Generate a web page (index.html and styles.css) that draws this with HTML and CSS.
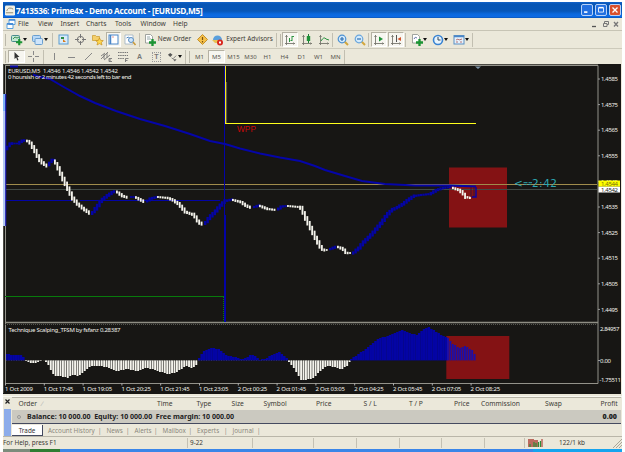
FILE: index.html
```html
<!DOCTYPE html>
<html lang="en">
<head>
<meta charset="utf-8">
<title>7413536: Prime4x - Demo Account - [EURUSD,M5]</title>
<link rel="stylesheet" href="styles.css">
</head>
<body>
<svg class="defs" aria-hidden="true">
  <symbol id="plus" viewBox="0 0 6 6"><path d="M2 0h2v2h2v2H4v2H2V4H0V2h2z" fill="#1c9434"/></symbol>
  <symbol id="caret" viewBox="0 0 4 3"><path d="M0 0h4L2 3z" fill="#111"/></symbol>
  <symbol id="axes" viewBox="0 0 12 12"><path d="M2.500 1v10M1 9.500h10M1.500 3l1-1.500 1 1.500M9.500 8.500l1 1-1 1" fill="none" stroke="#77776e" stroke-width=".9"/></symbol>
</svg>
<div class="window">
  <header class="title">
    <svg class="app-icon" width="10" height="11" viewBox="0 0 11 11"><rect width="11" height="11" rx="1.500" fill="#f2f0e4"/><path d="M2 6q1-4 5-3l2 1M1 8h8" stroke="#8a8268" fill="none"/></svg>
    <span class="title-text">7413536: Prime4x - Demo Account - [EURUSD,M5]</span>
    <span class="controls">
      <svg class="ctl" viewBox="0 0 12 12"><path d="M2.500 8.500h4" stroke="#fff" stroke-width="2"/></svg>
      <svg class="ctl" viewBox="0 0 12 12"><path d="M3 3.500h6v5H3z" stroke="#fff" fill="none"/><path d="M3 3h6" stroke="#fff" stroke-width="1.500"/></svg>
      <svg class="ctl close" viewBox="0 0 12 12"><path d="M3 3l6 6M9 3l-6 6" stroke="#fff" stroke-width="1.600"/></svg>
    </span>
  </header>

  <nav class="menu">
    <svg class="menu-icon" width="10" height="10" viewBox="0 0 10 10"><path d="M3 .5h6v5H3zM1 4.500h6v5H1z" fill="#fff" stroke="#5aa0dc"/><path d="M1 5h6M3 1h6" stroke="#3f86d6" stroke-width="1.300"/></svg>
    <span class="m-file">File</span><span class="m-view">View</span><span class="m-insert">Insert</span><span class="m-charts">Charts</span><span class="m-tools">Tools</span><span class="m-window">Window</span><span>Help</span>
    <svg class="mdi" width="30" height="8" viewBox="0 0 30 8"><path d="M2 6.500h4" stroke="#555" stroke-width="1.300"/><path d="M13.500 3.500h3.500v3h-3.500zM14.500 3V1.500h4v3H17" stroke="#777" fill="none"/><path d="M24 2l4 4.500M28 2l-4 4.500" stroke="#777" stroke-width="1.300"/></svg>
  </nav>

  <div class="bar bar-main">
    <i class="grip"></i>
    <span class="tool w22"><svg width="12" height="12" viewBox="0 0 12 12"><rect x=".5" y="1.500" width="8" height="6" rx="1" fill="#c3e8d2" stroke="#4a8a8e"/><path d="M2 5l2-2 2 1 2-1" stroke="#3c8f57" fill="none"/><use href="#plus" x="5" y="5" width="6.500" height="6.500"/></svg><svg width="4" height="3"><use href="#caret"/></svg></span>
    <span class="tool w22"><svg width="12" height="12" viewBox="0 0 12 12"><rect x=".5" y="1.500" width="8" height="6" rx="1" fill="#b7d8f7" stroke="#6a9fd0"/><rect x="3" y="4.500" width="7.500" height="6" rx="1" fill="#cfe5fb" stroke="#6a9fd0"/></svg><svg width="4" height="3"><use href="#caret"/></svg></span>
    <i class="sep gap3"></i>
    <span class="tool w17"><svg width="11" height="11" viewBox="0 0 11 11"><rect x="1" y="1" width="9" height="9" fill="#d7ebfa" stroke="#5b9bd0"/><path d="M3 3h3v2H3z" fill="#2b8c43"/><path d="M5 5l3 3H5z" fill="#d97b1d"/></svg></span>
    <span class="tool w17"><svg width="11" height="11" viewBox="0 0 11 11"><circle cx="5.500" cy="5.500" r="3.200" fill="none" stroke="#777"/><path d="M5.500 0v4M5.500 7v4M0 5.500h4M7 5.500h4" stroke="#777"/></svg></span>
    <span class="tool w17"><svg width="12" height="12" viewBox="0 0 12 12"><path d="M.5 1.500h3l1 1h3v4h-7z" fill="#f4cf6b" stroke="#c99a2e" stroke-width=".7"/><path d="M7.500 4l1.200 2.400 2.600.2-2 1.800.7 2.600-2.500-1.400L5 11l.7-2.600-2-1.800 2.600-.2z" fill="#ffd84e" stroke="#c78f1e" stroke-width=".7"/></svg></span>
    <span class="tool w15 on"><svg width="11" height="11" viewBox="0 0 11 11"><rect x="1" y="1" width="9" height="9" fill="#fff" stroke="#4a86c8"/><path d="M2.500 1v9" stroke="#4a86c8" stroke-width="1.500"/><path d="M4.500 3h1" stroke="#c33"/></svg></span>
    <span class="tool w18"><svg width="12" height="12" viewBox="0 0 12 12"><path d="M1 1h8v9H1z" fill="#fff" stroke="#9cb0c0" stroke-width=".8"/><path d="M2.500 4l2-1 2 2" stroke="#4884c0" fill="none"/><circle cx="7" cy="6" r="2.500" fill="#cfe6fb" stroke="#5b8fc4"/><path d="M9 8l2.500 3" stroke="#c89a3a" stroke-width="1.500"/></svg></span>
    <i class="sep"></i>
    <span class="tool order"><svg width="12" height="12" viewBox="0 0 12 12"><path d="M1.500.5h5l2 2v6.500h-7z" fill="#fff" stroke="#8a8f8a" stroke-width=".8"/><path d="M3 3h3M3 5h4" stroke="#9aa"/><use href="#plus" x="5" y="5" width="7" height="7"/></svg><b>New Order</b></span>
    <span class="tool w14"><svg width="11" height="11" viewBox="0 0 11 11"><path d="M5.500.5l5 5-5 5-5-5z" fill="#f5c04a" stroke="#c4912c"/><path d="M5.500 3v3M5.500 7v1.500" stroke="#7c530c" stroke-width="1.200"/></svg></span>
    <span class="tool advisors"><svg width="12" height="12" viewBox="0 0 12 12"><path d="M1 6a4.500 4.500 0 0 1 9 0z" fill="#5aa0dc"/><path d="M0 6h10l-2 3H3z" fill="#e9c354"/><circle cx="8" cy="8.500" r="3" fill="#d8281e"/><path d="M7 7.500h2v2H7z" fill="#fff"/></svg><b>Expert Advisors</b></span>
    <i class="sep"></i><i class="grip late"></i>
    <span class="tool w16 on"><svg width="12" height="12"><use href="#axes"/><path d="M5.500 4v4M8 2v5M8 2.500h2M6.500 6.500H8" stroke="#2c9440" fill="none"/></svg></span>
    <span class="tool w17"><svg width="12" height="12"><use href="#axes"/><path d="M7.500 0v9" stroke="#1d7d32"/><path d="M5.800 2h3.400v5H5.800z" fill="#1f9238"/></svg></span>
    <span class="tool w17"><svg width="12" height="12"><use href="#axes"/><path d="M3 7q3-5 5-2l3 1" stroke="#2c9440" fill="none"/></svg></span>
    <i class="sep"></i>
    <span class="tool w17 zoom"><svg width="12" height="12" viewBox="0 0 12 12"><path d="M7.500 7.500l3.500 3.500" stroke="#d3a63c" stroke-width="2"/><circle cx="5" cy="5" r="3.800" fill="#d5ebfb" stroke="#4d92d4" stroke-width="1.200"/><path d="M3 5h4M5 3v4" stroke="#2c6fb4" stroke-width="1.200"/></svg></span>
    <span class="tool w17"><svg width="12" height="12" viewBox="0 0 12 12"><path d="M7.500 7.500l3.500 3.500" stroke="#d3a63c" stroke-width="2"/><circle cx="5" cy="5" r="3.800" fill="#d5ebfb" stroke="#6aa6dc" stroke-width="1.200"/><path d="M3 5h4" stroke="#2c6fb4" stroke-width="1.200"/></svg></span>
    <i class="sep"></i>
    <span class="tool w16 on scroll"><svg width="12" height="12"><use href="#axes"/><path d="M6 2.500l4 2.500-4 2.500z" fill="#1f9238"/></svg></span>
    <span class="tool w16 on shift"><svg width="12" height="12"><use href="#axes"/><path d="M6.500 1v7" stroke="#555"/><path d="M11 3v4L7.500 5z" fill="#d2542a"/></svg></span>
    <i class="sep gap3"></i>
    <span class="tool w20"><svg width="12" height="12" viewBox="0 0 12 12"><path d="M1.500.5h5l2 2v6.500h-7z" fill="#fff" stroke="#8a8f8a" stroke-width=".8"/><path d="M3 5q1-3 3-1" stroke="#67a" fill="none"/><use href="#plus" x="5" y="5" width="7" height="7"/></svg><svg width="4" height="3"><use href="#caret"/></svg></span>
    <span class="tool w20"><svg width="12" height="12" viewBox="0 0 12 12"><circle cx="6" cy="6" r="4.500" fill="#e8f4fd" stroke="#3a84d2" stroke-width="1.600"/><path d="M6 3v3h2.500" stroke="#345" fill="none"/></svg><svg width="4" height="3"><use href="#caret"/></svg></span>
    <span class="tool w22"><svg width="12" height="12" viewBox="0 0 12 12"><rect x="1" y="1.500" width="10" height="8.500" fill="#e6f1fa" stroke="#5a8fc4"/><path d="M1 2.500h10" stroke="#4a86c8" stroke-width="1.500"/><path d="M3 6l2-1 1 1 3-1M3 8h2M7 8h2" stroke="#a55" stroke-width=".8" fill="none"/></svg><svg width="4" height="3"><use href="#caret"/></svg></span>
    <i class="sep"></i>
  </div>

  <div class="bar bar-draw">
    <i class="grip"></i>
    <span class="tool w17 on"><svg width="11" height="11" viewBox="0 0 11 11"><path d="M3.500 1l5 5H6.300l1.200 3-1.200.5L5.200 6.600 3.500 8z" fill="#333"/></svg></span>
    <span class="tool w17"><svg width="11" height="11"><path d="M5.500 0v4M5.500 7v4M0 5.500h4M7 5.500h4" stroke="#888"/></svg></span>
    <i class="sep gap3"></i>
    <span class="tool w17"><svg width="11" height="11"><path d="M5.500 2v7" stroke="#888"/></svg></span>
    <span class="tool w17"><svg width="11" height="11"><path d="M2 6.500h7" stroke="#888"/></svg></span>
    <span class="tool w17"><svg width="11" height="11"><path d="M2 9l7-7" stroke="#888"/></svg></span>
    <span class="tool w17"><svg width="12" height="11"><path d="M1 8l7-7M1 5l4-3M4 9l6-5M4 3v5M7 2v5M9 7.500h3M9 7.500v3h3M9 9h2" stroke="#777" stroke-width=".9" fill="none"/></svg></span>
    <span class="tool w17"><svg width="12" height="11"><path d="M1 1.500h10M1 4.500h10M1 7.500h6" stroke="#777" stroke-dasharray="1.500 .7"/><path d="M8.500 11V7.500h3M8.500 9.500h2" stroke="#777" stroke-width=".9" fill="none"/></svg></span>
    <span class="tool w17 letter">A</span>
    <span class="tool w17 letter"><em>T</em></span>
    <span class="tool w19"><svg width="11" height="10" viewBox="0 0 12 11"><path d="M1 3l2.500-2L6 3 3.500 5.500z" fill="#555"/><path d="M5 6.500l1.500 1L10 4" fill="none" stroke="#777"/><path d="M6.500 8h4L8.500 10.500z" fill="#666"/></svg><svg width="4" height="3"><use href="#caret"/></svg></span>
    <i class="sep gap2"></i><i class="grip late"></i>
    <span class="tool w17 tf">M1</span><span class="tool w17 tf on">M5</span><span class="tool w17 tf">M15</span><span class="tool w17 tf">M30</span><span class="tool w17 tf">H1</span><span class="tool w17 tf">H4</span><span class="tool w17 tf">D1</span><span class="tool w17 tf">W1</span><span class="tool w17 tf">MN</span>
    <i class="sep"></i>
  </div>

  <svg class="chart" id="chart" width="619" height="332" viewBox="3 64 619 332">
    <rect x="3" y="64" width="618" height="330" fill="#171614"/>
    <path d="M3 64.500H598M3.500 64V393" stroke="#4c4b45"/>
    <rect x="449" y="167.500" width="58" height="60" class="zone"/>
    <rect x="446.300" y="336" width="63" height="43" class="zone"/>
    <g id="histogram"></g>
    <path d="M5.500 66V383.500H598V65.500H5" class="frame"/>
    <path d="M5 322.500H598" stroke="#8f8e84" stroke-width="1.600"/>
    <path d="M5 324.500H598" stroke="#55554f" stroke-dasharray="1 1"/>
    <g fill="none">
      <path d="M6 200.500H72M80 200.500H220" stroke="#0303a6"/>
      <path d="M6 184.500H597" stroke="#a08c4c"/>
      <path d="M6 189.500H597" stroke="#414a46"/>
      <path d="M224.500 66V322" stroke="#0303a6"/>
      <path d="M225 215V322" stroke="#0303a6" stroke-width="2"/>
      <path d="M225.500 66V123.500" stroke="#f2ea18"/>
      <path d="M226.600 82V123" stroke="#80765a" stroke-width=".8"/>
      <path d="M225 123.500H476" stroke="#ffff1c"/>
      <path d="M5 296.500H224" stroke="#087a0c"/>
      <path d="M223.500 297V322" stroke="#087a0c" stroke-dasharray="1 1"/>
      <polyline class="average" points="10,66.500 18,66.500"/>
      <polyline class="average" points="33,74.500 38,76.500 50,79 62,86 80,96 95,103 116,111 140,119 165,126 190,134 210,141 225,144 240,148.500 260,153.500 280,157.500 300,161 315,166 325,170 345,176 362,181 385,184 415,185.500 450,185.500 476,186.500"/>
    </g>
    <g id="candles"></g>
    <path d="M471 197V187M474 197V187" stroke="#3a1030" stroke-width="1"/>
    <path d="M476 187V197H472" stroke="#0b03a0" fill="none" stroke-width="1.500"/>
    <path d="M475 66.500h6l-3 2.500z" fill="#7d93a6"/>
    <rect x="3" y="94" width="3" height="132" fill="#fff"/>
    <rect x="3" y="94" width="3" height="17" fill="#7fb2f5"/>
    <rect x="3" y="111" width="2" height="115" fill="#b4c8f0"/>
    <path d="M5.700 94V226" stroke="#1a1ab4" stroke-width="1.200"/>
    <text class="label" x="8" y="72.700" textLength="110">EURUSD,M5&#160; 1.4546 1.4546 1.4542 1.4542</text>
    <text class="label" x="8" y="79.300" textLength="123.500">0 hoursish or 2 minutes 42 seconds left to bar end</text>
    <text class="label" x="8.500" y="332.300" textLength="112">Technique Scalping_TFSM by fsfanz 0.28387</text>
    <text class="wpp" x="237" y="131.500" textLength="19" lengthAdjust="spacingAndGlyphs">WPP</text>
    <text class="timer" x="514" y="186.700" textLength="43">&lt;--2:42</text>
    <path d="M523.500 182.700h4M528.500 182.700h3.500" stroke="#2ca6b0"/>
    <g id="scale"></g>
    <rect x="598.500" y="180.500" width="21.500" height="6.200" fill="#ffff00"/>
    <text class="tag olive" x="601" y="185.700" textLength="17">1.4544</text>
    <rect x="598.500" y="186.700" width="21.500" height="5.800" fill="#fff"/>
    <text class="tag" x="601" y="191.800" textLength="17">1.4542</text>
    <text class="label" x="600" y="330.600" textLength="19.500">2.84957</text>
    <text class="label" x="600" y="362.800" textLength="11">0.00</text>
    <text class="label" x="599.500" y="381.600" textLength="21.500">-1.75511</text>
    <path d="M598 360.500h2" stroke="#999"/>
  </svg>

  <section class="terminal">
    <div class="side"><svg width="5" height="5"><path d="M.5.5l4 4M4.500.5l-4 4" stroke="#222" stroke-width="1.200"/></svg><span></span></div>
    <div class="panel">
      <div class="head">
        <span class="c-order">Order <u>∕</u></span><span class="c-time">Time</span><span class="c-type">Type</span><span class="c-size">Size</span><span class="c-symbol">Symbol</span><span class="c-price">Price</span><span class="c-sl">S / L</span><span class="c-tp">T / P</span><span class="c-price2">Price</span><span class="c-comm">Commission</span><span class="c-swap">Swap</span><span class="c-profit">Profit</span>
      </div>
      <div class="balance"><i></i><span>Balance: 10 000.00&nbsp; Equity: 10 000.00&nbsp; Free margin: 10 000.00</span><b>0.00</b></div>
      <div class="tabs"><span class="active">Trade</span><span class="tab t1">Account History</span><span class="tab t2">News</span><span class="tab t3">Alerts</span><span class="tab t4">Mailbox</span><span class="tab t5">Experts</span><span class="tab t6">Journal</span></div>
    </div>
  </section>

  <footer class="status">
    <span class="help">For Help, press F1</span><span class="s1">9-22</span><span class="s2"></span><span class="s3"></span><span class="s3"></span><span class="s3"></span><span class="s3"></span><span class="s4"></span>
    <span class="net"><svg width="15" height="8"><path d="M1 0v8M3 0v8M5 0v8M7 1v7M9 1v7" stroke="#a3281e" stroke-width="1.300"/><path d="M2 5v3M6 3v5M8 4v4M10.500 3v5M12.500 2v6" stroke="#2f8c37" stroke-width="1.200"/><path d="M14 0v8" stroke="#a3281e"/></svg></span>
    <span class="kb">122/1 kb</span>
    <svg class="resize" width="9" height="9"><path d="M0 9L9 0M3 9l6-6M6 9l3-3" stroke="#a9a698"/></svg>
  </footer>
  <div class="taskbar"><i class="t-grey"></i><i class="t-green"></i><i class="t-blue"></i><i class="t-tray"></i></div>
</div>
<script src="chart.js"></script>
</body>
</html>
```
FILE: styles.css
```css
* { box-sizing: border-box; }
body { margin: 0; background: #fff; font-family: "Noto Sans", "Liberation Sans", sans-serif; font-size: 6.7px; color: #3c3b36; overflow: hidden; line-height: 1; }
.defs { position: absolute; width: 0; height: 0; }
.window { width: 619px; height: 450px; margin: 2px 3px 0; background: #ebe8da; display: flex; flex-direction: column; white-space: nowrap; }
svg { display: block; flex: none; overflow: visible; }

.title { height: 16px; flex: none; display: flex; align-items: center; padding: 0 1px 0 2px; background: linear-gradient(#1263cb 0, #0755b4 2px, #0756b8 9px, #0a68dd 12px, #0d6ae4 15px, #0a4fa8 16px); }
.app-icon { margin-right: 1px; }
.title-text { color: #fff; font: bold 8.300px "Open Sans", sans-serif; letter-spacing: -.3px; }
.controls { margin-left: auto; display: flex; gap: 2px; }
.ctl { width: 12px; height: 12px; background: #2370e0; border: .5px solid #b8d2f8; border-radius: 2px; }
.close { background: #d9502c; }

.menu { height: 13px; flex: none; display: flex; align-items: center; padding: 0 2px 0 3px; border-bottom: 1px solid #c7c4b5; }
.menu-icon { margin-right: 2px; }
.m-file { width: 20px; }
.m-view { width: 22.500px; }
.m-insert { width: 25.500px; }
.m-charts { width: 29px; }
.m-tools { width: 25.500px; }
.m-window { width: 32.500px; }
.mdi { margin-left: auto; }

.bar { display: flex; align-items: center; flex: none; padding-left: 1px; }
.bar-main { height: 18px; border-bottom: 1px solid #cdcabb; }
.bar-draw { height: 15px; }
.grip { width: 1px; height: 12px; margin: 0 2px 0 1px; border-left: 1px solid #bbb8aa; }
.grip.late { margin: 0 1px 0 3px; }
.sep { width: 1px; height: 14px; background: #c2bfb1; flex: none; }
.gap3 { margin: 0 2px 0 1px; }
.gap2 { margin-left: 1px; }
.tool { display: flex; align-items: center; justify-content: center; height: 15px; flex: none; }
.bar-draw .tool { height: 13px; }
.tool b { font-weight: normal; font-size: 6.500px; margin-left: 2px; }
.on { background: #f7f6f0; border: 1px solid; border-color: #b4b1a3 #fff #fff #b4b1a3; }
.w14 { width: 14px; }
.w15 { width: 15px; }
.w16 { width: 16px; }
.w17 { width: 17px; }
.w18 { width: 18px; }
.w19 { width: 19px; }
.w20 { width: 21px; }
.w22 { width: 21.500px; }
.order { width: 55px; }
.advisors { width: 67px; }
.tool.advisors b { font-size: 6.400px; }
.zoom { margin-left: 1px; }
.scroll { margin-left: 2px; }
.shift { margin-left: 1px; }
.letter { font: bold 7px "Liberation Sans", sans-serif; color: #777; }
.letter em { font-style: normal; border: 1px dotted #999; width: 9px; text-align: center; line-height: 8px; }
.tf { font-size: 6px; color: #55534c; }

.chart text { white-space: pre; }
.zone { fill: #841214; }
.frame { fill: none; stroke: #93928a; }
.average { stroke: #0505a8; stroke-width: 2; }
.label, .tag { font: 6px "Noto Sans", sans-serif; fill: #f0f0ea; }
.tag { fill: #222; }
.olive { fill: #77700a; }
.wpp { font: 8.500px "Liberation Sans", sans-serif; fill: #c80808; }
.timer { font: 10.500px "DejaVu Sans", sans-serif; fill: #2ca6b0; }

.terminal { display: flex; height: 40px; flex: none; border-top: 1px solid #f8f7f0; }
.side { width: 9px; padding: 2px 1px 0; display: flex; flex-direction: column; align-items: center; gap: 5px; }
.side span { width: 7px; height: 29px; background: #8cacea; }
.panel { flex: 1; border-top: 1px solid #b5b2a5; margin-right: 1px; padding-top: 1px; }
.head { display: flex; height: 11px; align-items: center; padding-left: 6.500px; }
.head u { text-decoration: none; color: #aaa; margin-left: 3px; }
.c-order { width: 138.500px; }
.c-time { width: 39.500px; }
.c-type { width: 35px; }
.c-size { width: 32px; }
.c-symbol { width: 52.500px; }
.c-price { width: 47.500px; }
.c-sl { width: 45.500px; }
.c-tp { width: 45px; }
.c-price2 { width: 27px; }
.c-comm { width: 64px; }
.c-swap { width: 55.500px; }
.balance { display: flex; align-items: center; height: 14px; background: #cbc9c0; border-bottom: 1px solid #444a60; font-weight: bold; color: #222; padding: 0 4px 0 5px; font-size: 7.050px; }
.balance i { width: 4px; height: 4px; border: 1px solid #999; border-radius: 50%; margin-right: 6px; }
.balance b { margin-left: auto; }
.tabs { display: flex; color: #8b897e; height: 12px; align-items: center; font-size: 6.300px; }
.tabs span { height: 11px; line-height: 11px; flex: none; }
.tabs .active { width: 31px; background: #fff; color: #333; text-align: center; border: solid #444a60; border-width: 0 1px 1px 0; }
.tabs .tab { display: flex; justify-content: space-between; padding-left: 5px; }
.tab::after { content: "|"; }
.tabs .t1 { width: 58.500px; }
.tabs .t2 { width: 28px; }
.tabs .t3 { width: 28px; }
.tabs .t4 { width: 34.500px; }
.tabs .t5 { width: 35.500px; }
.tabs .t6 { width: 33px; }

.status { height: 13px; flex: none; border-top: 1px solid #b9b6a9; display: flex; align-items: center; font-size: 6.400px; }
.status > span { height: 10px; line-height: 10px; flex: none; }
.s1, .s2, .s3, .s4, .net { border-left: 1px solid #c4c1b3; }
.help { width: 184px; }
.s1 { width: 65px; padding-left: 2px; }
.s2 { width: 61px; }
.s3 { width: 42.750px; }
.s4 { width: 40px; }
.net { width: 35px; padding: 1px 0 0 3px; }
.resize { margin-left: auto; }
.taskbar { display: flex; height: 3px; flex: none; }
.t-grey { width: 27px; background: #7c8c7c; }
.t-green { width: 30px; background: #2f7d32; }
.t-blue { width: 473px; background: #3a86e8; }
.t-tray { flex: 1; background: #16a4ee; }
```
FILE: chart.js
```js
const NS = "http://www.w3.org/2000/svg";
const PITCH = 2.425;
const BLUE = "#0404a4";
const WHITE = "#f4f3ec";

function add(parent, name, attrs, text) {
  const el = document.createElementNS(NS, name);
  for (const key in attrs) el.setAttribute(key, attrs[key]);
  if (text) el.textContent = text;
  parent.appendChild(el);
}

function valueAt(points, x) {
  for (let i = 1; i < points.length; i++) {
    const [x0, y0] = points[i - 1], [x1, y1] = points[i];
    if (x <= x1) return y0 + (y1 - y0) * Math.max(0, x - x0) / (x1 - x0);
  }
  return points[points.length - 1][1];
}

const runs = [
  [BLUE, [[6,148],[8,145],[11,143.5],[17,143.5],[21,141],[25,140]]],
  [WHITE, [[26,141],[29,142.5],[32,147],[35,152],[38,158],[41,162],[46,166]]],
  [BLUE, [[48,164],[50,161],[53,160]]],
  [WHITE, [[54,162],[58,169],[61,176],[65,184],[68,190],[72,198],[77,204],[83,209],[90,214]]],
  [BLUE, [[91,213],[96,207],[100,201],[106,196],[112,192],[115,191]]],
  [WHITE, [[116,192],[122,196],[128,198]]],
  [BLUE, [[130,197],[134,197]]],
  [WHITE, [[135,197.5],[140,200],[144,202]]],
  [BLUE, [[146,201],[150,198.5],[156,197]]],
  [WHITE, [[157,197],[167,198],[172,200],[178,204],[185,212],[193,215],[198,222],[203,225]]],
  [BLUE, [[204,223],[209,217],[214,212],[219,206],[224,201],[231,199.5]]],
  [WHITE, [[232,200],[240,202],[246,206],[251,208]]],
  [BLUE, [[253,207],[258,205.5]]],
  [WHITE, [[259,206],[267,209],[275,210]]],
  [BLUE, [[277,209],[281,206.5],[286,206]]],
  [WHITE, [[287,206],[298,207],[301,209],[304,216],[308,224],[312,232],[316,240],[320,247],[323,250],[328,250]]],
  [BLUE, [[329,249],[336,246.5]]],
  [WHITE, [[337,247],[342,249],[346,253],[351,253]]],
  [BLUE, [[352,253],[358,248],[362,243],[366,239],[371,234],[376,228],[381,222],[386,215],[391,210],[397,207],[402,204],[407,200],[413,196],[420,195],[429,194],[436,190],[442,188],[451,187]]],
  [WHITE, [[452,188],[458,190],[462,193],[465,197],[470,198]]]
];
const candles = document.getElementById("candles");
for (const [color, points] of runs) {
  const end = points[points.length - 1][0];
  for (let x = points[0][0]; x <= end; x += PITCH) {
    const y = valueAt(points, x);
    const slope = Math.abs(valueAt(points, x + 1.2) - valueAt(points, x - 1.2));
    const h = 1.7 + Math.min(slope, 5) * 1.6;
    add(candles, "rect", { x, y: y - h / 2, width: color === WHITE ? 1.85 : 2.4, height: h, fill: color });
  }
}

const ZERO = 360.4;
const areas = [
  [BLUE, [[5,354],[12,355],[20,355],[24,360]]],
  [WHITE, [[25,361],[30,363],[36,362.5],[41,361]]],
  [WHITE, [[45,362],[48,366],[51,372],[54,376],[60,376],[66,378],[72,375],[78,376],[84,371],[90,366],[98,366],[106,367],[114,371],[118,371],[126,369],[136,371],[144,368],[152,369],[160,372],[168,374],[174,373],[180,369],[186,366],[192,368],[197,363]]],
  [BLUE, [[198,358],[202,352],[206,349],[212,347.5],[219,350],[225,355],[233,357],[241,359],[246,357],[250,354],[254,356],[258,360],[264,359],[270,355],[278,352],[284,357],[287,360]]],
  [WHITE, [[288,362],[294,370],[300,380],[306,380],[314,377],[320,370],[326,366],[334,367],[340,370],[346,366],[349,362]]],
  [BLUE, [[350,359],[357,354],[366,348],[376,339],[386,336],[396,332],[401,330],[408,333],[415,335],[421,330],[427,327],[434,331],[440,335],[447,338],[452,344],[459,348],[465,346],[471,350],[476,358]]]
];
const histogram = document.getElementById("histogram");
add(histogram, "path", { d: "M6 360.500H350", stroke: "#6d6c66", "stroke-width": 0.5, "stroke-dasharray": "1 1.500" });
for (const [color, points] of areas) {
  const end = points[points.length - 1][0];
  for (let x = points[0][0]; x <= end; x += PITCH) {
    const y = Math.round(valueAt(points, x));
    const overlay = x > 446;
    add(histogram, "rect", {
      x, y: Math.min(y, ZERO), width: color === WHITE || overlay ? 1.9 : PITCH + 0.2,
      height: Math.max(Math.abs(ZERO - y), 0.6), fill: overlay ? "#1c0ea8" : color
    });
  }
}

const scale = document.getElementById("scale");
["1.4585", "1.4575", "1.4565", "1.4555", "1.4545", "1.4535", "1.4525", "1.4515", "1.4505", "1.4495"].forEach((price, i) => {
  const y = 79 + i * 25.6;
  add(scale, "path", { d: `M598 ${y}h2`, stroke: "#999" });
  add(scale, "text", { class: "label", x: 601, y: y + 2.2, textLength: 17 }, price);
});
["1 Oct 2009", "1 Oct 17:45", "1 Oct 19:05", "1 Oct 20:25", "1 Oct 21:45", "1 Oct 23:05", "2 Oct 00:25", "2 Oct 01:45", "2 Oct 03:05", "2 Oct 04:25", "2 Oct 05:45", "2 Oct 07:05", "2 Oct 08:25"].forEach((time, i) => {
  const x = 5.5 + i * 38.8;
  add(scale, "path", { d: `M${x} 383v2.500`, stroke: "#aaa" });
  add(scale, "text", { class: "label", x: x - 0.5, y: 391, textLength: i ? 29.5 : 28 }, time);
});
```
